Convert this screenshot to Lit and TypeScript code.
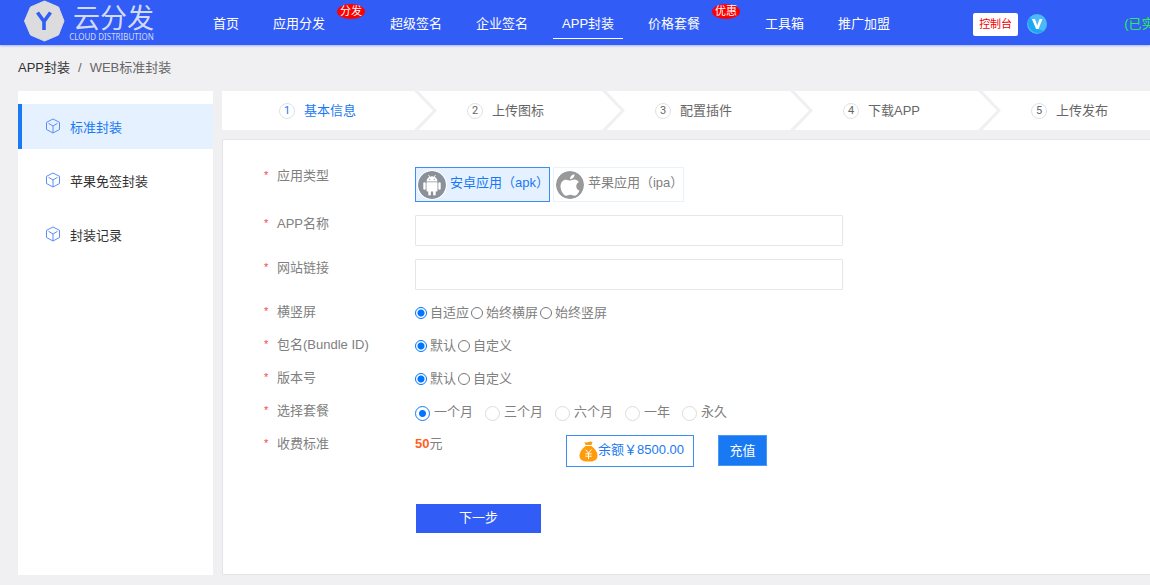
import { LitElement, html, css, svg, nothing } from "lit";
import { customElement, state } from "lit/decorators.js";
import { classMap } from "lit/directives/class-map.js";

interface NavItem {
  text: string;
  badge?: string;
  active?: boolean;
}

const NAV: NavItem[] = [
  { text: "首页" },
  { text: "应用分发", badge: "分发" },
  { text: "超级签名" },
  { text: "企业签名" },
  { text: "APP封装", active: true },
  { text: "价格套餐", badge: "优惠" },
  { text: "工具箱" },
  { text: "推广加盟" },
];

const base = css`
  * {
    box-sizing: border-box;
  }
  a {
    color: inherit;
    text-decoration: none;
  }
  button,
  input {
    font: inherit;
    margin: 0;
  }
  svg {
    display: block;
    flex: none;
  }
`;

@customElement("site-header")
export class SiteHeader extends LitElement {
  static styles = [
    base,
    css`
      :host {
        display: flex;
        align-items: center;
        height: 45px;
        padding-left: 24px;
        background: #315cf5;
        box-shadow: 0 1px 2px rgba(49, 92, 245, 0.4);
        color: #fff;
        white-space: nowrap;
        overflow: hidden;
      }
      .logo {
        display: flex;
        flex: none;
        width: 180px;
        height: 45px;
        gap: 4px;
        color: #d3dafa;
      }
      .words {
        display: flex;
        flex-direction: column;
        align-items: center;
        padding-top: 6px;
      }
      .name {
        padding-left: 4px;
        font-size: 27px;
        line-height: 26px;
      }
      .sub {
        font-family: "Noto Sans", sans-serif;
        font-size: 8px;
        line-height: 10px;
      }
      nav {
        display: flex;
        flex: none;
        gap: 16px;
        height: 45px;
      }
      .item {
        display: flex;
        align-items: flex-start;
        gap: 3px;
      }
      .link {
        margin-top: 11px;
        padding: 0 9px;
        height: 28px;
        line-height: 26px;
        border-bottom: 1px solid transparent;
      }
      .link.active {
        border-color: #fff;
      }
      .badge {
        width: 28px;
        height: 15px;
        margin-top: 4px;
        border-radius: 50%;
        background: #f00;
        font-size: 11px;
        line-height: 15px;
        text-align: center;
      }
      .console {
        flex: none;
        margin: 3px 9px 0 74px;
        width: 45px;
        height: 23px;
        padding: 0;
        border: 0;
        border-radius: 2px;
        background: #fff;
        color: #f00000;
        font-size: 11px;
      }
      .vip {
        margin-top: 3px;
      }
      .verified {
        margin: 3px 0 0 77px;
        color: #2fef4e;
      }
    `,
  ];

  render() {
    return html`
      <a class="logo" href="#">
        <svg width="41" height="42" viewBox="0 0 41 42" aria-hidden="true">
          <path d="M20.5 1 34.500 7 40 21 34.500 35 20.500 41 6.500 35 .5 21 6.500 7Z" fill="#dcdcde" stroke="#dcdcde" stroke-linejoin="round"/>
          <path d="M13.500 12.500 20 21.500 26.500 12.500M20 20.500V30" fill="none" stroke="#315cf5" stroke-width="3.600"/>
        </svg>
        <span class="words">
          <span class="name">云分发</span>
          <span class="sub">CLOUD DISTRIBUTION</span>
        </span>
      </a>
      <nav>
        ${NAV.map(
          (n) => html`<div class="item">
            <a href="#" class=${classMap({ link: true, active: !!n.active })}>${n.text}</a>
            ${n.badge ? html`<span class="badge">${n.badge}</span>` : nothing}
          </div>`
        )}
      </nav>
      <button class="console">控制台</button>
      <svg class="vip" width="20" height="20" viewBox="0 0 20 20" aria-hidden="true">
        <circle cx="10" cy="10" r="10" fill="#4cb9f8"/>
        <path d="M3 3A10 10 0 0 0 17 17L10 15Z" fill="#1da7f2"/>
        <path d="M5 5h3L10.200 11.500 12.500 5H15.500L11.500 15H9Z" fill="#fff"/>
      </svg>
      <span class="verified">(已实名)</span>
    `;
  }
}

@customElement("side-menu")
export class SideMenu extends LitElement {
  static styles = [
    base,
    css`
      :host {
        display: flex;
        flex-direction: column;
        gap: 9px;
        padding-top: 13px;
        background: #fff;
      }
      a {
        display: flex;
        align-items: center;
        gap: 9px;
        height: 45px;
        padding: 2px 0 0 23px;
        border-left: 4px solid transparent;
        color: #333;
      }
      a.active {
        border-color: #1879f3;
        background: #e6f1ff;
        color: #1879f3;
      }
      .cube {
        margin-bottom: 3px;
      }
    `,
  ];

  render() {
    return ["标准封装", "苹果免签封装", "封装记录"].map(
      (text, i) => html`<a href="#" class=${classMap({ active: i === 0 })}>
        <svg class="cube" width="16" height="16" viewBox="0 0 16 16" fill="none" stroke="#5b8df8" stroke-linejoin="round" aria-hidden="true">
          <path d="M8 1 14.500 4.300V11.500L8 15 1.500 11.500V4.300ZM8 15V8M3.500 5.300 8 8 12.500 5.300"/>
        </svg>
        <span>${text}</span>
      </a>`
    );
  }
}

@customElement("step-bar")
export class StepBar extends LitElement {
  static styles = [
    base,
    css`
      :host {
        display: flex;
        height: 39px;
        background: #fff;
        overflow: hidden;
        color: #666;
      }
      .step {
        display: flex;
        flex: 1 0 188px;
        padding-left: 4px;
      }
      .step:first-of-type {
        padding-left: 0;
      }
      .label {
        display: flex;
        flex: 1;
        align-items: center;
        justify-content: center;
        gap: 9px;
        padding-left: 3px;
      }
      .arrow + .label {
        padding-right: 27px;
      }
      .num {
        width: 16px;
        height: 16px;
        margin-top: 1px;
        border: 1px solid #dfe1e6;
        border-radius: 50%;
        font-family: Roboto, sans-serif;
        font-size: 11px;
        line-height: 14px;
        text-align: center;
      }
      .active {
        color: #1879f3;
      }
    `,
  ];

  render() {
    return ["基本信息", "上传图标", "配置插件", "下载APP", "上传发布"].map(
      (text, i) => html`<div class="step">
        ${i > 0
          ? html`<svg class="arrow" width="23" height="39" viewBox="0 0 23 39" aria-hidden="true">
              <path d="M0 0H4.500L23 19.500 4.500 39H0L19 19.500Z" fill="#f0f0f3"/>
            </svg>`
          : nothing}
        <div class=${classMap({ label: true, active: i === 0 })}>
          <span class="num">${i + 1}</span><span>${text}</span>
        </div>
      </div>`
    );
  }
}

const android = svg`
  <circle cx="14" cy="14" r="14" fill="#8b9199"/>
  <g fill="#fff">
    <path d="M8.500 10.500a5.500 5.300 0 0 1 11 0Z"/>
    <path d="M8.500 11.300h11v8.200a1 1 0 0 1-1 1h-9a1 1 0 0 1-1-1Z"/>
    <rect x="5.300" y="11.300" width="2.400" height="7.500" rx="1.200"/>
    <rect x="20.300" y="11.300" width="2.400" height="7.500" rx="1.200"/>
    <rect x="10.300" y="18" width="2.600" height="6.500" rx="1.300"/>
    <rect x="15.100" y="18" width="2.600" height="6.500" rx="1.300"/>
  </g>
  <path d="M10.500 4 11.800 6.300M17.500 4 16.200 6.300" stroke="#fff" stroke-width=".8"/>
  <circle cx="11.700" cy="8.300" r=".6" fill="#8b9199"/><circle cx="16.300" cy="8.300" r=".6" fill="#8b9199"/>`;

const apple = svg`
  <circle cx="14" cy="14" r="14" fill="#999"/>
  <path fill="#fff" d="M18.500 3.300c.2 2.700-1.900 4.900-4.400 4.900-.2-2.500 2-4.700 4.400-4.900ZM14.200 9.500c1.200 0 2.200-1 4.200-1 1.900 0 3.500 1 4.400 2.400-3.700 2.200-3.200 7.200.7 8.700-.9 2.400-2.700 5.100-4.700 5.200-1.700 0-2.300-1-4.400-1s-2.700 1-4.300 1c-2.600 0-5.600-5.200-5.600-9.200 0-4.200 2.700-6.900 5.500-6.900 1.900 0 3.100.8 4.200.8Z"/>`;

@customElement("pack-form")
export class PackForm extends LitElement {
  static styles = [
    base,
    css`
      :host {
        display: block;
        padding: 27px 20px 41px 41px;
        border: 1px solid #e4e4e6;
        border-right: 0;
        border-radius: 2px 0 0 2px;
        background: #fff;
        color: #808080;
      }
      form {
        display: grid;
        gap: 13px;
      }
      .row {
        display: grid;
        grid-template-columns: 151px minmax(0, 1fr);
      }
      .caption {
        display: flex;
        gap: 7px;
        line-height: 18px;
      }
      .star {
        width: 6px;
        color: #f5493d;
        font-size: 11px;
        line-height: 16px;
      }
      .types {
        display: flex;
        gap: 3px;
      }
      .type {
        display: flex;
        align-items: center;
        gap: 4px;
        height: 35px;
        padding: 0 0 0 2px;
        border: 1px solid #e9f1fb;
        background: #fff;
        color: #808080;
        white-space: nowrap;
      }
      .type.active {
        border-color: #3b8df5;
        background: #e6f1ff;
        color: #1879f3;
      }
      .type svg {
        border-radius: 50%;
        box-shadow: 0 0 0 1px #fff;
      }
      .type span {
        margin-bottom: 3px;
      }
      .text {
        width: 100%;
        max-width: 428px;
        height: 31px;
        padding: 0 8px;
        border: 1px solid #e6e6e6;
        border-radius: 1px;
        outline: 0;
        color: #555;
      }
      .options {
        display: flex;
        align-items: center;
        gap: 2px;
        height: 20px;
      }
      .option {
        display: flex;
        align-items: center;
        gap: 3px;
        line-height: 20px;
      }
      .options.wide {
        gap: 12px;
      }
      .wide .option {
        gap: 4px;
      }
      .radio {
        appearance: none;
        width: 12px;
        height: 12px;
        border: 1px solid #767676;
        border-radius: 50%;
        background: #fff;
      }
      .radio:checked {
        border-color: #0075ff;
        background: radial-gradient(circle, #0075ff 3px, #fff 4px);
      }
      .wide .radio {
        width: 15px;
        height: 15px;
        margin-top: 2px;
        border-color: #dcdcdc;
      }
      .wide .radio:checked {
        border-color: #1879f3;
      }
      .pay {
        display: flex;
        align-items: flex-start;
      }
      .price {
        width: 151px;
        line-height: 18px;
      }
      .price b {
        color: #ff5f1f;
      }
      .balance {
        display: flex;
        align-items: center;
        width: 128px;
        height: 32px;
        padding-left: 12px;
        border: 1px solid #3b8df5;
        color: #1879f3;
        white-space: nowrap;
      }
      .balance span {
        margin-bottom: 3px;
      }
      .recharge {
        width: 49px;
        height: 31px;
        margin-left: 24px;
        padding: 0;
        border: 1px solid #4a97f7;
        background: #1879f3;
        color: #fff;
      }
      .next {
        width: 125px;
        height: 29px;
        margin: 24px 0 0 152px;
        padding: 0 0 2px;
        border: 0;
        background: #315cf5;
        color: #fff;
      }
    `,
  ];

  @state() private type = 0;

  private caption(text: string, id?: string) {
    return id
      ? html`<label class="caption" for=${id}><span class="star">*</span>${text}</label>`
      : html`<span class="caption"><span class="star">*</span>${text}</span>`;
  }

  private radios(text: string, name: string, options: string[], wide = false) {
    return html`<div class="row" role="radiogroup" aria-label=${text}>
      ${this.caption(text)}
      <div class=${classMap({ options: true, wide })}>
        ${options.map(
          (o, i) => html`<label class="option">
            <input class="radio" type="radio" name=${name} .checked=${i === 0} />${o}
          </label>`
        )}
      </div>
    </div>`;
  }

  render() {
    const types = [
      { text: "安卓应用（apk）", icon: android },
      { text: "苹果应用（ipa）", icon: apple },
    ];
    return html`<form @submit=${(e: Event) => e.preventDefault()}>
      <div class="row">
        ${this.caption("应用类型")}
        <div class="types">
          ${types.map(
            (t, i) => html`<button
              type="button"
              class=${classMap({ type: true, active: this.type === i })}
              aria-pressed=${this.type === i}
              @click=${() => (this.type = i)}
            >
              <svg width="28" height="28" viewBox="0 0 28 28" aria-hidden="true">${t.icon}</svg>
              <span>${t.text}</span>
            </button>`
          )}
        </div>
      </div>
      <div class="row">
        ${this.caption("APP名称", "name")}
        <input class="text" id="name" type="text" />
      </div>
      <div class="row">
        ${this.caption("网站链接", "url")}
        <input class="text" id="url" type="text" />
      </div>
      ${this.radios("横竖屏", "screen", ["自适应", "始终横屏", "始终竖屏"])}
      ${this.radios("包名(Bundle ID)", "bundle", ["默认", "自定义"])}
      ${this.radios("版本号", "version", ["默认", "自定义"])}
      ${this.radios("选择套餐", "plan", ["一个月", "三个月", "六个月", "一年", "永久"], true)}
      <div class="row">
        ${this.caption("收费标准")}
        <div class="pay">
          <span class="price"><b>50</b>元</span>
          <div class="balance">
            <svg width="19" height="21" viewBox="0 0 19 21" aria-hidden="true">
              <path d="M5.500 1q2 .8 4 0t4 0L12.500 4h-6Z" fill="#ff9c0c"/>
              <path d="M6.500 5h6C16 8 18.500 11 18.500 14.500c0 4-2.500 6-9 6s-9-2-9-6C.5 11 3 8 6.500 5Z" fill="#ff9c0c"/>
              <path d="M6.500 8.500 9.500 12 12.500 8.500M9.500 12v6M6.300 12.800h6.400M6.300 15.200h6.400" stroke="#fff" fill="none"/>
            </svg>
            <span>余额￥8500.00</span>
          </div>
          <button type="button" class="recharge">充值</button>
        </div>
      </div>
      <div><button class="next">下一步</button></div>
    </form>`;
  }
}

@customElement("app-root")
export class AppRoot extends LitElement {
  static styles = [
    base,
    css`
      :host {
        display: block;
        min-height: 100vh;
        background: #f0f0f3;
        font-family: "Liberation Sans", "Noto Sans CJK SC", sans-serif;
        font-size: 13px;
        line-height: 18px;
      }
      .crumbs {
        display: flex;
        align-items: center;
        gap: 8px;
        height: 46px;
        padding-left: 18px;
        color: #666;
      }
      .crumbs a {
        color: #333;
      }
      .body {
        display: grid;
        grid-template-columns: 195px minmax(0, 1fr);
        gap: 9px;
        padding: 0 0 10px 18px;
      }
      .content {
        display: grid;
        grid-template-rows: auto 1fr;
        gap: 9px;
      }
    `,
  ];

  render() {
    return html`
      <site-header></site-header>
      <div class="crumbs"><a href="#">APP封装</a><span>/</span><span>WEB标准封装</span></div>
      <div class="body">
        <side-menu></side-menu>
        <main class="content">
          <step-bar></step-bar>
          <pack-form></pack-form>
        </main>
      </div>
    `;
  }
}
